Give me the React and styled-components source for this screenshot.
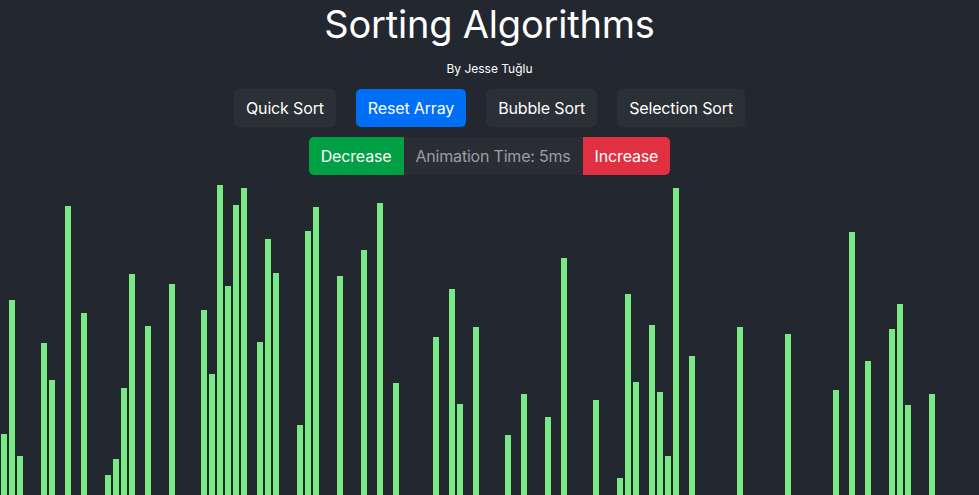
import React, { useState } from "react";
import styled, { createGlobalStyle } from "styled-components";

const GlobalStyle = createGlobalStyle`
  html, body {
    margin: 0;
    padding: 0;
    background: #23272f;
    overflow: hidden;
  }
  * { box-sizing: border-box; }
`;

// top y of each bar in the 495px window, null = below the fold
const TOPS = [
  434, 300, 456, null, null, 343, 380, null, 206, null,
  313, null, null, 475, 459, 388, 274, null, 326, null,
  null, 284, null, null, null, 310, 374, 185, 286, 205,
  188, null, 342, 239, 273, null, null, 425, 231, 207,
  null, null, 276, null, null, 250, null, 203, null, 383,
  null, null, null, null, 337, null, 289, 404, null, 327,
  null, null, null, 435, null, 394, null, null, 417, null,
  258, null, null, null, 400, null, null, 478, 294, 382,
  null, 325, 392, 456, 188, null, 356, null, null, null,
  null, null, 327, null, null, null, null, null, 334, null,
  null, null, null, null, 390, null, 232, null, 361, null,
  null, 329, 304, 405, null, null, 394, null, null, null,
  null, null,
];

const Page = styled.div`
  height: 100vh;
  display: flex;
  flex-direction: column;
  font-family: Inter, "Liberation Sans", sans-serif;
  color: #fff;
`;

const Header = styled.header`
  display: flex;
  flex-direction: column;
  align-items: center;
  padding-top: 1px;
`;

const Title = styled.h1`
  margin: 0;
  font-size: 38px;
  font-weight: 400;
  line-height: 46px;
  letter-spacing: -0.2px;
`;

const Author = styled.p`
  margin: 14px 0 0;
  font-size: 12px;
  line-height: 16px;
`;

const Row = styled.div`
  display: flex;
  justify-content: center;
  gap: ${(p) => p.$gap || 0}px;
  margin-top: ${(p) => p.$top || 0}px;
`;

const COLORS = {
  dark: "#2b2f36",
  primary: "#006ff5",
  success: "#00a045",
  danger: "#e03041",
};

const Button = styled.button`
  font-family: inherit;
  font-size: 16px;
  line-height: 24px;
  letter-spacing: -0.15px;
  padding: 7px 12px;
  border: none;
  border-radius: ${(p) => p.$radius || "5px"};
  background: ${(p) => COLORS[p.$variant || "dark"]};
  color: #fff;
  cursor: pointer;
`;

const Readout = styled.span`
  font-size: 16px;
  line-height: 24px;
  letter-spacing: -0.2px;
  padding: 7px 12px;
  background: #2a2e34;
  color: #9b9ea3;
`;

const Bars = styled.div`
  flex: 1;
  display: flex;
  align-items: flex-end;
  overflow: hidden;
`;

const Bar = styled.div`
  flex-shrink: 0;
  width: 6px;
  margin: 0 1px;
  background: #79e985;
`;

export default function App() {
  const [ms, setMs] = useState(5);

  return (
    <Page>
      <GlobalStyle />
      <Header>
        <Title>Sorting Algorithms</Title>
        <Author>By Jesse Tuğlu</Author>
      </Header>
      <Row $gap={20} $top={12}>
        <Button>Quick Sort</Button>
        <Button $variant="primary">Reset Array</Button>
        <Button>Bubble Sort</Button>
        <Button>Selection Sort</Button>
      </Row>
      <Row $top={10}>
        <Button $variant="success" $radius="5px 0 0 5px" onClick={() => setMs(Math.max(1, ms - 1))}>
          Decrease
        </Button>
        <Readout>Animation Time: {ms}ms</Readout>
        <Button $variant="danger" $radius="0 5px 5px 0" onClick={() => setMs(ms + 1)}>
          Increase
        </Button>
      </Row>
      <Bars>
        {TOPS.map((t, i) => (
          <Bar key={i} style={{ height: t == null ? 0 : 495 - t }} />
        ))}
      </Bars>
    </Page>
  );
}
